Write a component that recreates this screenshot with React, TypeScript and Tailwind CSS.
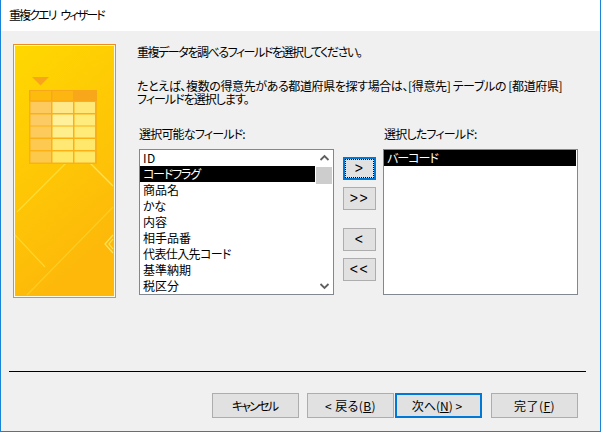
import React from 'react';

const jp = "[font-family:'Noto_Sans_CJK_JP','Liberation_Sans',sans-serif] [font-feature-settings:'palt']";

const leftFields = [
    { label: 'ID', cls: 'tracking-[0.5px]' },
    { label: 'コードフラグ', cls: 'tracking-[-1.2px]', selected: true },
    { label: '商品名', cls: 'tracking-[0px]' },
    { label: 'かな', cls: 'tracking-[-0.5px]' },
    { label: '内容', cls: 'tracking-[0px]' },
    { label: '相手品番', cls: 'tracking-[0px]' },
    { label: '代表仕入先コード', cls: 'tracking-[-0.6px]' },
    { label: '基準納期', cls: 'tracking-[0px]' },
    { label: '税区分', cls: 'tracking-[0px]' },
];

const WizardArt = () => {
    const colX = [17.5, 39.5, 61.5];
    const rowY = [58, 70.5, 82.5, 95, 107.5];
    const rowFill = [
        ['#fdca60', '#ffe88a', '#ffe778'],
        ['#fdcb64', '#fff09c', '#ffec7c'],
        ['#fdcb5c', '#ffee8c', '#ffeb78'],
        ['#fdc950', '#ffe874', '#ffe86c'],
        ['#fdc94c', '#ffe768', '#ffe768'],
    ];
    return (
        <svg width="103" height="254" viewBox="0 0 103 254" className="block shrink-0">
            <defs>
                <linearGradient id="bg" x1="0" y1="0" x2="0.35" y2="1">
                    <stop offset="0" stopColor="#ffd800" />
                    <stop offset="1" stopColor="#fdb80a" />
                </linearGradient>
            </defs>
            <rect x="0.5" y="0.5" width="102" height="253" fill="url(#bg)" stroke="#f08c1e" />
            <rect x="1.5" y="1.5" width="100" height="251" fill="none" stroke="#fffbe8" />
            <path d="M19 33H36L27.5 41.5Z" fill="#f9a51a" />
            <g fill="none" strokeWidth="1.2">
                <path d="M4 168L60 112" stroke="#ffdc30" />
                <path d="M67 109L100 142" stroke="#ffe25a" />
                <path d="M2 191L32 223" stroke="#ffd62a" />
                <path d="M100 163L14 251" stroke="#ffcd22" />
                <path d="M100 191L92 200L100 209" stroke="#ffe25a" />
                <path d="M100 195L96 200L100 205" stroke="#ffe25a" />
            </g>
            <rect x="16" y="46" width="68" height="74" fill="#fbb116" />
            <rect x="16" y="46" width="68" height="11" fill="#f9a71a" />
            {colX.map((x, c) => (
                <rect key={x} x={x} y="47" width="20.5" height="9.5" fill={c === 0 ? '#fdbb0e' : c === 1 ? '#fdb512' : '#f9a71a'} />
            ))}
            {rowY.map((y, r) =>
                colX.map((x, c) => (
                    <rect key={`${r}-${c}`} x={x} y={y} width="20.5" height="11" fill={rowFill[r][c]} />
                ))
            )}
        </svg>
    );
};

const SmallBtn = ({ children, focused }: { children: React.ReactNode; focused?: boolean }) => (
    <button
        className={`w-[33px] h-[23px] bg-[#e1e1e1] flex items-center justify-center [font-family:'Liberation_Sans',sans-serif] text-[14px] text-black tracking-[1.5px] ${focused ? 'border-2 border-[#0078d7] outline-1 outline-dotted outline-black -outline-offset-3' : 'border border-[#adadad]'}`}
    >
        {children}
    </button>
);

const WizBtn = ({ children, focused, cls }: { children: React.ReactNode; focused?: boolean; cls?: string }) => (
    <button
        className={`w-[87px] h-[25px] bg-[#e1e1e1] text-[12px] leading-none text-black flex items-center justify-center whitespace-pre ${cls ?? ''} ${focused ? 'border-2 border-[#0078d7]' : 'border border-[#adadad]'}`}
    >
        {children}
    </button>
);

export default function App() {
    return (
        <div className={`w-[601px] h-[432px] bg-[#f0f0f0] border-l border-r border-b border-[#1883d7] flex flex-col text-[12px] leading-[13px] text-black ${jp}`}>
            {/* Title bar */}
            <div className="h-[31px] bg-white pl-[8px] pt-[8px] tracking-[-1.9px] [word-spacing:4px] shrink-0">重複クエリ ウィザード</div>

            <div className="flex pl-[12px] pt-[13px] h-[322px]">
                <WizardArt />

                <div className="pl-[21px] pt-[1px] flex-1">
                    <p className="tracking-[-1.45px]">重複データを調べるフィールドを選択してください。</p>
                    <p className="mt-[21px] tracking-[-0.38px] whitespace-nowrap">たとえば、複数の得意先がある都道府県を探す場合は、[得意先] テーブルの [都道府県]</p>
                    <p className="tracking-[-1px]">フィールドを選択します。</p>

                    <div className="flex mt-[22px]">
                        <div className="w-[204px] ml-[2px] shrink-0">
                            <div className="h-[22px] tracking-[-0.8px]">選択可能なフィールド:</div>
                            <div className="w-[195px] h-[146px] border border-[#828790] bg-white flex overflow-hidden">
                                <div className="w-[175px]">
                                    {leftFields.map(f => (
                                        <div key={f.label} className={`h-[16px] leading-[16px] pl-[3px] whitespace-nowrap ${f.cls} ${f.selected ? 'bg-black text-white' : ''}`}>
                                            {f.label}
                                        </div>
                                    ))}
                                </div>
                                <div className="w-[18px] bg-white flex flex-col items-center justify-between">
                                    <svg width="17" height="17" viewBox="0 0 17 17"><path d="M4.5 10L8.5 6L12.5 10" fill="none" stroke="#606060" strokeWidth="1.8" /></svg>
                                    <div className="w-[16px] h-[17px] bg-[#cdcdcd] mb-auto" />
                                    <svg width="17" height="17" viewBox="0 0 17 17"><path d="M4.5 7L8.5 11L12.5 7" fill="none" stroke="#606060" strokeWidth="1.8" /></svg>
                                </div>
                            </div>
                        </div>

                        <div className="w-[40px] pt-[30px] flex flex-col shrink-0">
                            <SmallBtn focused>&gt;</SmallBtn>
                            <div className="mt-[7px]"><SmallBtn>&gt;&gt;</SmallBtn></div>
                            <div className="mt-[18px]"><SmallBtn>&lt;</SmallBtn></div>
                            <div className="mt-[7px]"><SmallBtn>&lt;&lt;</SmallBtn></div>
                        </div>

                        <div className="w-[195px] shrink-0">
                            <div className="h-[22px] pl-[1px] tracking-[-0.8px]">選択したフィールド:</div>
                            <div className="h-[146px] border border-[#828790] bg-white">
                                <div className="h-[16px] leading-[16px] pl-[3px] bg-black text-white mr-[1px] tracking-[-1px]">バーコード</div>
                            </div>
                        </div>
                    </div>
                </div>
            </div>

            <div className="ml-[8px] mr-[14px] h-px bg-black mt-[18px] shrink-0" />

            <div className="flex pl-[211px] pt-[21px]">
                <WizBtn cls="tracking-[-1.8px] pr-[2px]">キャンセル</WizBtn>
                <div className="ml-[8px]"><WizBtn cls="tracking-[0.4px]">&lt; 戻る(<span className="underline">B</span>)</WizBtn></div>
                <div className="ml-[1px]"><WizBtn focused cls="pr-[3px]">次へ(<span className="underline">N</span>) &gt;</WizBtn></div>
                <div className="ml-[9px]"><WizBtn cls="tracking-[0.5px]">完了(<span className="underline">F</span>)</WizBtn></div>
            </div>
        </div>
    );
}
